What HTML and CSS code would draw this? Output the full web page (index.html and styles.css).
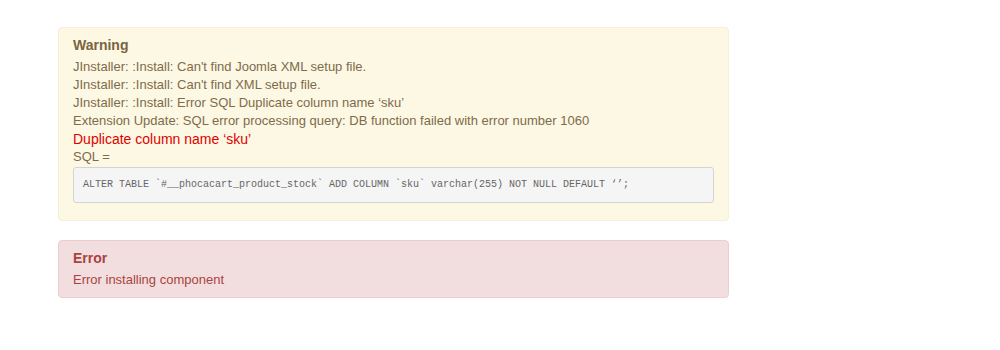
FILE: index.html
```html
<!DOCTYPE html>
<html lang="en">
<head>
    <meta charset="UTF-8">
    <title>Install messages</title>
    <link rel="stylesheet" href="styles.css">
</head>
<body>
    <div class="messages">
        <div class="alert alert-warning">
            <h4 class="alert-heading">Warning</h4>
            <div class="alert-message">JInstaller: :Install: Can't find Joomla XML setup file.</div>
            <div class="alert-message">JInstaller: :Install: Can't find XML setup file.</div>
            <div class="alert-message">JInstaller: :Install: Error SQL Duplicate column name ‘sku’</div>
            <div class="alert-message">Extension Update: SQL error processing query: DB function failed with error number 1060</div>
            <div class="alert-message sql-error">Duplicate column name ‘sku’</div>
            <div class="alert-message">SQL =</div>
            <pre>ALTER TABLE `#__phocacart_product_stock` ADD COLUMN `sku` varchar(255) NOT NULL DEFAULT ‘’;</pre>
        </div>

        <div class="alert alert-error">
            <h4 class="alert-heading">Error</h4>
            <div class="alert-message">Error installing component</div>
        </div>
    </div>
</body>
</html>
```

FILE: styles.css
```css
* {
    margin: 0;
    padding: 0;
    box-sizing: border-box;
}

body {
    background: #fff;
    font-family: 'Liberation Sans', Arial, sans-serif;
    font-size: 13px;
    line-height: 18px;
}

.messages {
    width: 671px;
    margin-left: 58px;
    padding-top: 27px;
}

.alert {
    padding: 8px 14px;
    border: 1px solid;
    border-radius: 4px;
    margin-bottom: 19px;
}

.alert-warning {
    background: #fcf8e3;
    border-color: #f7efd6;
    color: #7f6b4c;
}

.alert-warning .alert-heading {
    color: #7a6441;
}

.alert-error {
    background: #f2dede;
    border-color: #ebcdd2;
    color: #a94442;
}

.alert-heading {
    font-size: 14px;
    font-weight: bold;
    line-height: 18px;
    margin-bottom: 4px;
}

.sql-error {
    color: #e00000;
    font-size: 14px;
}

pre {
    margin: 1px 0 9px;
    padding: 8px 9px;
    font-family: 'Liberation Mono', 'DejaVu Sans Mono', monospace;
    font-size: 10px;
    line-height: 18px;
    color: #666;
    background: #f5f5f5;
    border: 1px solid #d4d4d4;
    border-radius: 3px;
    white-space: pre;
}
```
